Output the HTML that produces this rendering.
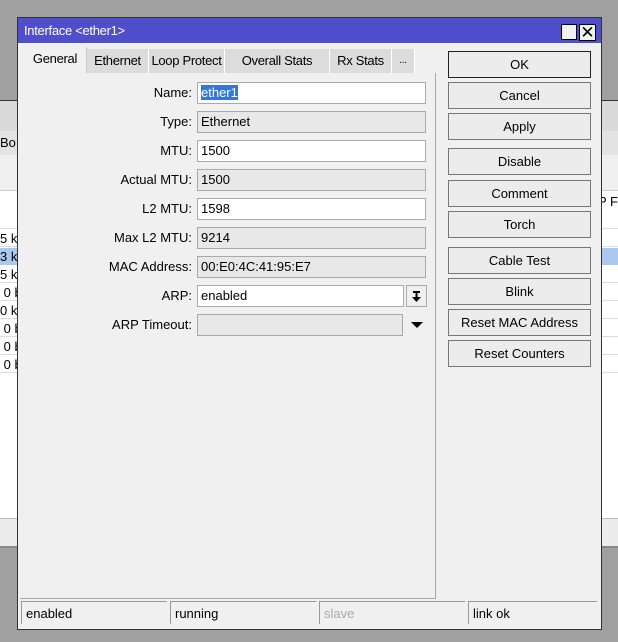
<!DOCTYPE html><html><head><style>
body{margin:0;width:618px;height:642px;position:relative;overflow:hidden;background:#a0a0a0;font-family:"Liberation Sans",sans-serif;font-size:13px;color:#000}
.a{position:absolute}
.lbl{position:absolute;right:426px;width:120px;text-align:right;line-height:22px}
.f{position:absolute;left:197px;width:224px;height:20px;border:1px solid #aaa;background:#e8e8e8;line-height:20px;padding-left:3px;box-sizing:content-box}
.w{background:#fff}
.b{position:absolute;left:448px;width:141px;height:25px;border:1px solid #777;background:#ececec;text-align:center;line-height:25px}
.t{position:absolute;top:49px;height:24px;line-height:24px;background:#dcdcdc;text-align:center;border-right:1px solid #fff;letter-spacing:-0.3px}
.s{position:absolute;top:601px;height:23px;line-height:24px;border-left:1px solid #999;border-top:1px solid #999;padding-left:4px;box-sizing:border-box}
</style></head><body>
<div class="a" style="left:0;top:100px;width:618px;height:446px;background:#f0f0f0;border-top:1px solid #333"></div>
<div class="a" style="left:0;top:101px;width:618px;height:30px;background:#d9d9d9"></div>
<div class="a" style="left:0;top:131px;width:618px;height:24px;background:#e3e3e3"></div>
<div class="a" style="left:0;top:136px;line-height:14px">Bo</div>
<div class="a" style="left:0;top:190px;width:618px;height:328px;background:#fff;border-top:1px solid #ccc"></div>
<div class="a" style="left:598px;top:194px">P F</div>
<div class="a" style="left:0;top:211px;width:618px;height:162px;background:repeating-linear-gradient(#fff 0 17px,#ddd 17px 18px)"></div>
<div class="a" style="left:0;top:248px;width:618px;height:17px;background:#a9c9ee"></div>
<div class="a" style="left:0;top:230px;line-height:18px;font-size:13px">5 kb<br>3 kb<br>5 kb<br>&nbsp;0 b<br>0 kb<br>&nbsp;0 b<br>&nbsp;0 b<br>&nbsp;0 b</div>
<div class="a" style="left:0;top:518px;width:618px;height:27px;background:#ececec;border-top:1px solid #bbb;border-bottom:2px solid #888"></div>
<div class="a" style="left:17px;top:17px;width:583px;height:611px;background:#f0f0f0;border:1px solid #333"></div>
<div class="a" style="left:18px;top:18px;width:583px;height:25px;background:#4f4fcb"></div>
<div class="a" style="left:24px;top:23px;color:#fff;line-height:16px;letter-spacing:-0.3px">Interface &lt;ether1&gt;</div>
<div class="a" style="left:561px;top:24px;width:14px;height:14px;border:1px solid #000;background:#f0f0f0"></div>
<div class="a" style="left:579px;top:24px;width:15px;height:15px;border:1px solid #000;background:#f0f0f0;font-size:17px;line-height:15px;text-align:center">✕</div>
<div class="a" style="left:20px;top:73px;width:415px;height:525px;border-right:1px solid #aaa;border-bottom:1px solid #aaa"></div>
<div class="t" style="left:24px;top:47px;height:26px;width:62px;background:#f0f0f0;border-right:1px solid #ccc">General</div>
<div class="t" style="left:87px;width:61px">Ethernet</div>
<div class="t" style="left:149px;width:75px">Loop Protect</div>
<div class="t" style="left:225px;width:104px">Overall Stats</div>
<div class="t" style="left:330px;width:61px">Rx Stats</div>
<div class="t" style="left:392px;width:22px;font-size:10px">...</div>
<div class="lbl" style="top:82px">Name:</div><div class="f w" style="top:82px"><span style="background:#3378d7;color:#fff">ether1</span></div>
<div class="lbl" style="top:111px">Type:</div><div class="f" style="top:111px">Ethernet</div>
<div class="lbl" style="top:140px">MTU:</div><div class="f w" style="top:140px">1500</div>
<div class="lbl" style="top:169px">Actual MTU:</div><div class="f" style="top:169px">1500</div>
<div class="lbl" style="top:198px">L2 MTU:</div><div class="f w" style="top:198px">1598</div>
<div class="lbl" style="top:227px">Max L2 MTU:</div><div class="f" style="top:227px">9214</div>
<div class="lbl" style="top:256px">MAC Address:</div><div class="f" style="top:256px">00:E0:4C:41:95:E7</div>
<div class="lbl" style="top:285px">ARP:</div><div class="f w" style="top:285px;width:202px">enabled</div>
<div class="a" style="left:406px;top:285px;width:19px;height:20px;border:1px solid #aaa;background:#f0f0f0"><svg width="19" height="20"><path d="M6 6h7M9.5 7v6" stroke="#000" stroke-width="2"/><path d="M5 11h9l-4.5 5z" fill="#000"/></svg></div>
<div class="lbl" style="top:314px">ARP Timeout:</div><div class="f" style="top:314px;width:201px"></div>
<div class="a" style="left:411px;top:322px;width:0;height:0;border-left:6px solid transparent;border-right:6px solid transparent;border-top:6px solid #000"></div>
<div class="b" style="top:51px;border-color:#222">OK</div>
<div class="b" style="top:82px">Cancel</div>
<div class="b" style="top:113px">Apply</div>
<div class="b" style="top:148px">Disable</div>
<div class="b" style="top:180px">Comment</div>
<div class="b" style="top:211px">Torch</div>
<div class="b" style="top:247px">Cable Test</div>
<div class="b" style="top:278px">Blink</div>
<div class="b" style="top:309px">Reset MAC Address</div>
<div class="b" style="top:340px">Reset Counters</div>
<div class="s" style="left:21px;width:146px">enabled</div>
<div class="s" style="left:170px;width:146px">running</div>
<div class="s" style="left:319px;width:146px;color:#aaa">slave</div>
<div class="s" style="left:468px;width:129px">link ok</div>
</body></html>
